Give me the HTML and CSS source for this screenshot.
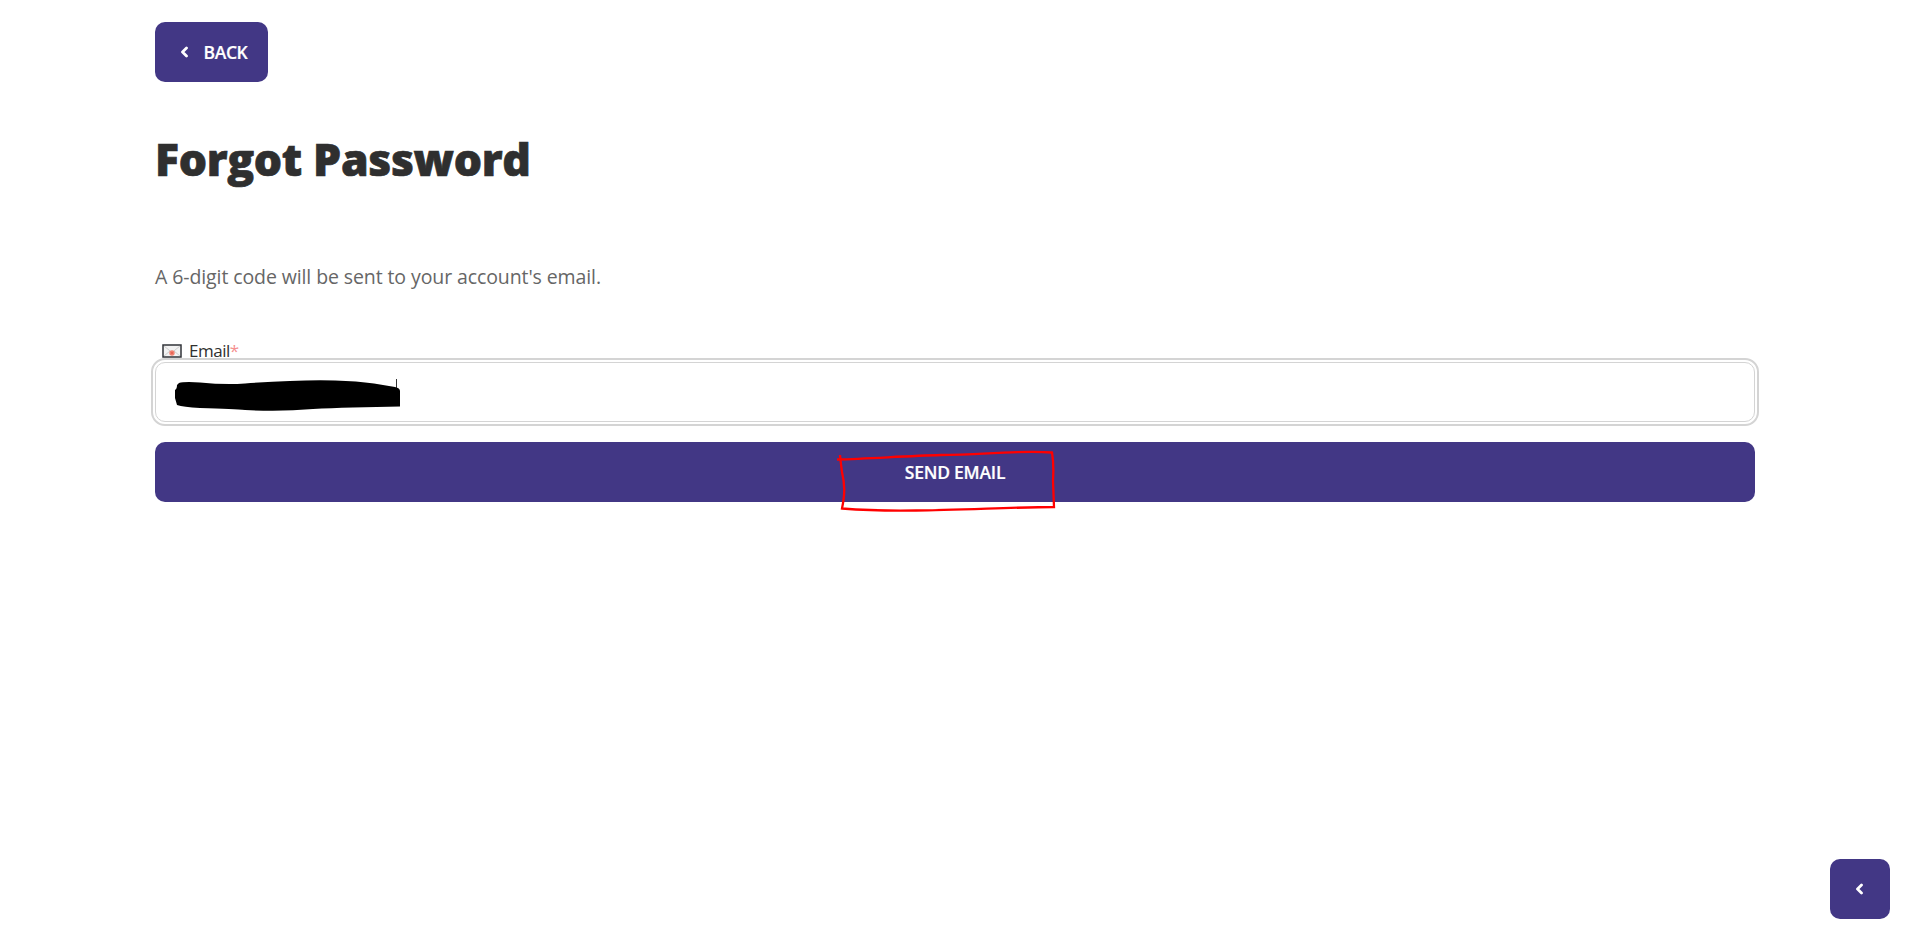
FILE: index.html
```
<!DOCTYPE html>
<html lang="en">
<head>
<meta charset="utf-8">
<title>Forgot Password</title>
<link rel="stylesheet" href="styles.css">
</head>
<body>
<main class="page">
  <button class="btn back" type="button">
    <svg class="chevron" viewBox="0 0 8 12"><path d="M5.500 2 1.500 6l4 4"/></svg><span class="back-text">BACK</span>
  </button>
  <h1 class="title"><span>Forgot Password</span></h1>
  <p class="intro"><span>A 6-digit code will be sent to your account's email.</span></p>
  <div class="label">
    <svg class="envelope" viewBox="0 0 20 14">
      <rect x="1" y="1" width="18" height="12" fill="#f2f2f2" stroke="#303338" stroke-width="1.5"/>
      <path d="M2 2l8 6.500 8-6.500M2 12l6-5M18 12l-6-5" fill="none" stroke="#c4c4c4" stroke-width=".8"/>
      <circle cx="10" cy="9" r="2.700" fill="#f08070"/>
      <circle cx="10" cy="9" r="1.100" fill="#e55d50"/>
    </svg>
    <span class="label-text">Email</span><span class="required">*</span>
  </div>
  <div class="field">
    <svg class="scribble" viewBox="0 0 228 34">
      <path d="M221.500 1v12" stroke="#333" fill="none"/>
      <path d="M4 5Q9 3.500 25 4.500Q50 7 70 5.500Q125 1.500 160 2.500Q182 3 199 5.500L220 9Q225 10 225 13V28.500L178 29.500Q155 30 138 31Q105 34 70 32Q60 31 25 30Q8 29 2 27L0 20V12Q2 11 2 7Z"/>
    </svg>
  </div>
  <div class="submit">
    <button class="btn send" type="button"><span class="send-text">SEND EMAIL</span></button>
    <svg class="marker" viewBox="0 0 220 64">
      <path d="M1 10.500C35 9.500 70 7 105 6C145 6 180 1 216 3.500Q218 15 217 32L218 58C180 58 120 61.500 80 61.500C50 62 25 61 6 59.500C9 45 9 36 6 23Q5 16 4 6"/>
    </svg>
  </div>
</main>
<button class="btn corner" type="button"><svg class="chevron" viewBox="0 0 8 12"><path d="M5.500 2 1.500 6l4 4"/></svg></button>
</body>
</html>
```
FILE: styles.css
```
* { box-sizing: border-box; }
body {
  margin: 0;
  height: 940px;
  overflow: hidden;
  background: #fff;
  font-family: "Open Sans", "Noto Sans", sans-serif;
}
.page { width: 1600px; margin: 0 160px 0 155px; padding-top: 22px; }
.btn {
  display: flex;
  align-items: center;
  justify-content: center;
  height: 60px;
  padding: 0;
  border: 0;
  border-radius: 10px;
  background: #423785;
  color: #fff;
  font: 600 17.500px/24px "Open Sans", "Noto Sans", sans-serif;
}
.back { width: 113px; gap: 15px; padding-left: 5px; }
.back-text { letter-spacing: -.4px; -webkit-text-stroke: .2px #fff; }
.chevron {
  width: 8px;
  height: 12px;
  fill: none;
  stroke: #fff;
  stroke-width: 2.800;
  stroke-linecap: round;
  stroke-linejoin: round;
}
.title {
  margin: 47px 0 0;
  color: #2f2f2f;
  font-size: 44.500px;
  line-height: 60px;
  font-weight: 800;
  letter-spacing: -.35px;
  -webkit-text-stroke: .7px #2f2f2f;
}
.intro {
  margin: 73px 0 0;
  color: #666;
  font-size: 19.500px;
  line-height: 30px;
  letter-spacing: -.1px;
}
.label {
  display: flex;
  align-items: center;
  height: 24px;
  margin: 47px 0 0 7px;
  color: #303030;
  font-size: 17px;
  line-height: 24px;
  letter-spacing: -.5px;
}
.envelope { width: 20px; height: 14px; margin-right: 7px; }
.required { color: #f59090; }
.field {
  height: 60px;
  margin-top: -1px;
  padding: 15px 19px;
  border: 1px solid #d4d4d4;
  border-radius: 10px;
  outline: 2px solid #d4d4d4;
  outline-offset: 2px;
}
.scribble { display: block; width: 228px; height: 34px; overflow: visible; }
.submit { position: relative; margin-top: 20px; }
.send { width: 100%; }
.send-text { letter-spacing: -.25px; -webkit-text-stroke: .2px #fff; }
.marker {
  position: absolute;
  left: 681px;
  top: 7px;
  width: 220px;
  height: 64px;
  fill: none;
  stroke: #f00;
  stroke-width: 2.300;
}
.corner { position: fixed; right: 25px; bottom: 21px; width: 60px; }
```
